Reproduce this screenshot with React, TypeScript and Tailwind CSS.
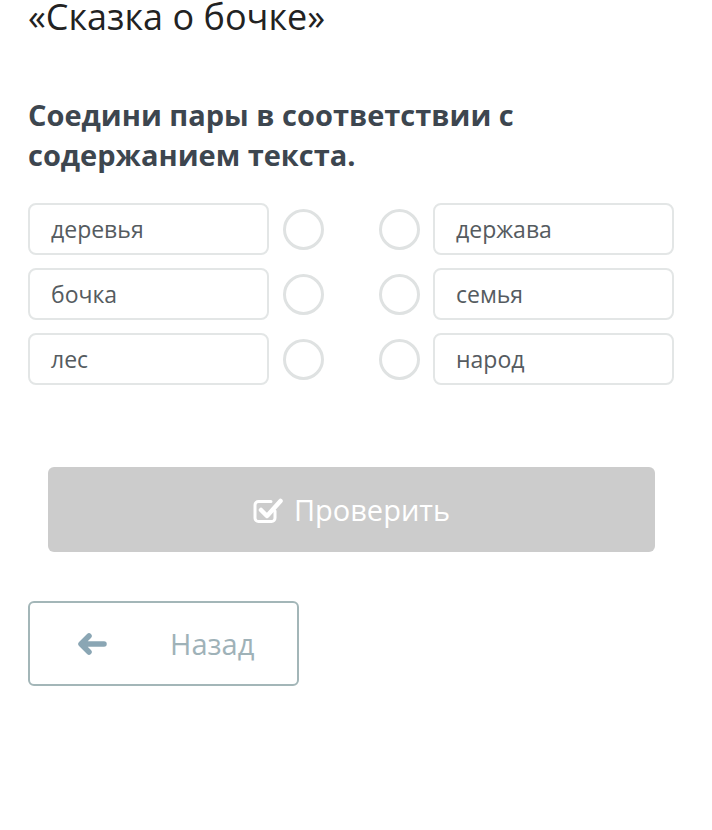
const left = ['деревья', 'бочка', 'лес'];
const right = ['держава', 'семья', 'народ'];

function Circle() {
  return <div className="w-[41px] h-[41px] rounded-full border-[3px] border-[#dfe2e2] bg-white shrink-0" />;
}

function CheckIcon() {
  return (
    <svg width="30" height="28" viewBox="0 0 30 28" fill="none">
      <path d="M22 15v7a3.5 3.5 0 0 1-3.5 3.5H5.5A3.5 3.5 0 0 1 2 22V9a3.5 3.5 0 0 1 3.5-3.5H18" stroke="white" strokeWidth="3" strokeLinecap="round" />
      <path d="M8 14l6 6L27.5 5" stroke="white" strokeWidth="4.5" strokeLinecap="round" strokeLinejoin="round" />
    </svg>
  );
}

function ArrowIcon() {
  return (
    <svg width="30" height="22" viewBox="0 0 30 22" fill="none">
      <path d="M27 11H5M12 3L4 11l8 8" stroke="#8aa6b4" strokeWidth="5.5" strokeLinecap="round" strokeLinejoin="round" />
    </svg>
  );
}

export default function App() {
  return (
    <div className="w-[712px] h-[830px] bg-white overflow-hidden font-['Open_Sans',sans-serif]">
      <div className="px-[28px]">
        {/* Title */}
        <h1 className="text-[36px] leading-[40px] text-[#222] -mt-[3px]">«Сказка о бочке»</h1>

        {/* Task */}
        <h2 className="mt-[58px] text-[29px] leading-[40px] font-bold text-[#3d464f]">
          Соедини пары в соответствии с<br />содержанием текста.
        </h2>

        {/* Pairs */}
        <div className="mt-[28px] flex flex-col gap-[13px]">
          {left.map((l, i) => (
            <div key={l} className="flex items-center">
              <div className="w-[241px] h-[52px] border-2 border-[#e3e6e6] rounded-[8px] flex items-center px-[21px] text-[23px] text-[#555b60]">
                {l}
              </div>
              <div className="ml-[14px]"><Circle /></div>
              <div className="ml-[55px]"><Circle /></div>
              <div className="ml-[13px] w-[241px] h-[52px] border-2 border-[#e3e6e6] rounded-[8px] flex items-center px-[21px] text-[23px] text-[#555b60]">
                {right[i]}
              </div>
            </div>
          ))}
        </div>

        {/* Check button */}
        <div className="mt-[82px] pl-[20px]">
          <button className="w-[607px] h-[85px] rounded-[6px] bg-[#cccccc] flex items-center justify-center gap-[11px] text-white text-[29px]">
            <CheckIcon />
            <span>Проверить</span>
          </button>
        </div>

        {/* Back */}
        <button className="mt-[49px] w-[271px] h-[85px] rounded-[6px] border-2 border-[#a3b6b8] flex items-center pl-[47px] text-[#9fb2b8] text-[29px]">
          <ArrowIcon />
          <span className="ml-[63px]">Назад</span>
        </button>
      </div>
    </div>
  );
}
